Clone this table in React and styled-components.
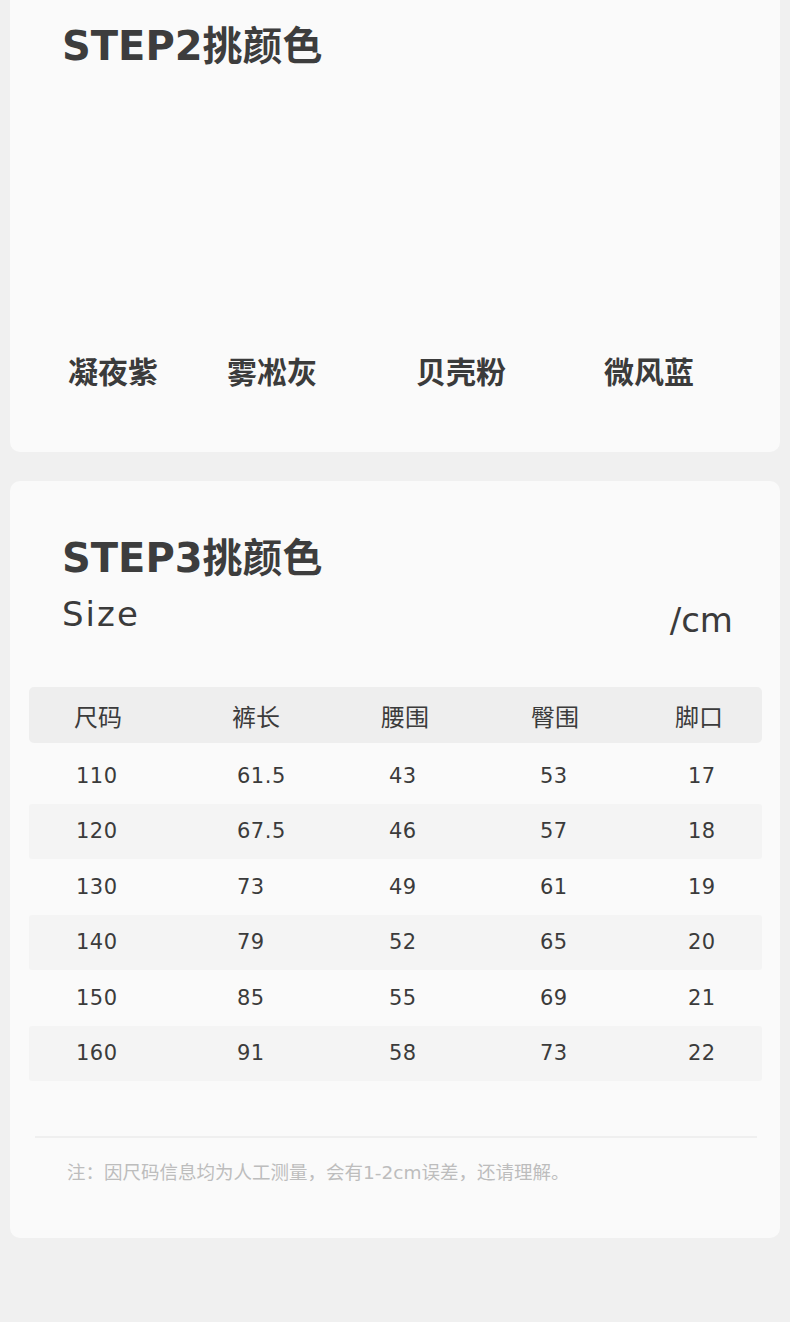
import React from 'react'
import styled, { createGlobalStyle } from 'styled-components';

const GlobalStyle = createGlobalStyle`
    body{
        margin:0;
        background:#f0f0f0;
        font-family:"DejaVu Sans","Noto Sans CJK SC",sans-serif;
        color:#3b3b3b;
    }
`

const colors = ["凝夜紫", "雾凇灰", "贝壳粉", "微风蓝"];
const headers = ["尺码", "裤长", "腰围", "臀围", "脚口"];
const rows = [
    ["110", "61.5", "43", "53", "17"],
    ["120", "67.5", "46", "57", "18"],
    ["130", "73", "49", "61", "19"],
    ["140", "79", "52", "65", "20"],
    ["150", "85", "55", "69", "21"],
    ["160", "91", "58", "73", "22"],
];

function App() {
  return (
    <Page>
        <GlobalStyle />
        <ColorCard>
            <Title>STEP2挑颜色</Title>
            <Swatches>
                {colors.map((c)=>(
                    <SwatchName key={c}>{c}</SwatchName>
                ))}
            </Swatches>
        </ColorCard>
        <SizeCard>
            <Title>STEP3挑颜色</Title>
            <SizeLine>
                <Sub>Size</Sub>
                <Unit>/cm</Unit>
            </SizeLine>
            <Table>
                <HeadRow>
                    {headers.map((h)=>(
                        <HeadCell key={h}>{h}</HeadCell>
                    ))}
                </HeadRow>
                {rows.map((r,i)=>(
                    <BodyRow key={r[0]} $striped={i%2===1}>
                        {r.map((v,j)=>(
                            <Cell key={j}>{v}</Cell>
                        ))}
                    </BodyRow>
                ))}
            </Table>
            <Divider />
            <Note>注：因尺码信息均为人工测量，会有1-2cm误差，还请理解。</Note>
        </SizeCard>
    </Page>
  )
}

const Page=styled.div`
    padding:0 10px 84px;
    display:flex;
    flex-direction:column;
    gap:29px;
`
const Card=styled.section`
    background:#fafafa;
    border-radius:10px;
`
const ColorCard=styled(Card)`
    border-radius:0 0 10px 10px;
    height:452px;
    box-sizing:border-box;
    padding:20px 0 0 52px;
    display:flex;
    flex-direction:column;
`
const Title=styled.h2`
    margin:0;
    font-size:40px;
    line-height:52px;
    font-weight:700;
    color:#3d3d3d;
`
const Swatches=styled.div`
    margin-top:278px;
    padding-left:6px;
    display:grid;
    grid-template-columns:159px 189px 188px 1fr;
`
const SwatchName=styled.div`
    font-family:"Noto Sans CJK SC",sans-serif;
    font-size:30px;
    line-height:40px;
    font-weight:700;
    color:#3b3b3b;
`
const SizeCard=styled(Card)`
    height:757px;
    box-sizing:border-box;
    padding:51px 0 0;
    display:flex;
    flex-direction:column;
    h2{
        padding-left:52px;
    }
`
const SizeLine=styled.div`
    display:flex;
    justify-content:space-between;
    align-items:flex-end;
    padding:0 47px 0 52px;
    margin-top:10px;
`
const Sub=styled.div`
    font-size:34px;
    line-height:40px;
    letter-spacing:2px;
    font-weight:500;
`
const Unit=styled.div`
    font-size:34px;
    line-height:40px;
    transform:translateY(6px);
`
const Table=styled.div`
    margin:53px 18px 0 19px;
    display:flex;
    flex-direction:column;
`
const HeadRow=styled.div`
    display:grid;
    grid-template-columns:158px 149px 150px 144px 1fr;
    align-items:center;
    height:56px;
    padding-left:45px;
    margin-bottom:5px;
    background:#eeeeee;
    border-radius:5px;
`
const HeadCell=styled.div`
    font-family:"Noto Sans CJK SC",sans-serif;
    font-size:24px;
    color:#3b3b3b;
`
const BodyRow=styled.div`
    display:grid;
    grid-template-columns:161px 152px 151px 148px 1fr;
    align-items:center;
    height:55.5px;
    padding-left:47px;
    background:${(p)=>p.$striped ? "#f4f4f4" : "transparent"};
    border-radius:3px;
`
const Cell=styled.div`
    font-size:21px;
    letter-spacing:0.5px;
`
const Divider=styled.div`
    margin:55px 23px 0 25px;
    height:2px;
    background:#efefef;
`
const Note=styled.p`
    margin:22px 0 0 57px;
    font-size:18.5px;
    line-height:26px;
    color:#bdbdbd;
`

export default App
